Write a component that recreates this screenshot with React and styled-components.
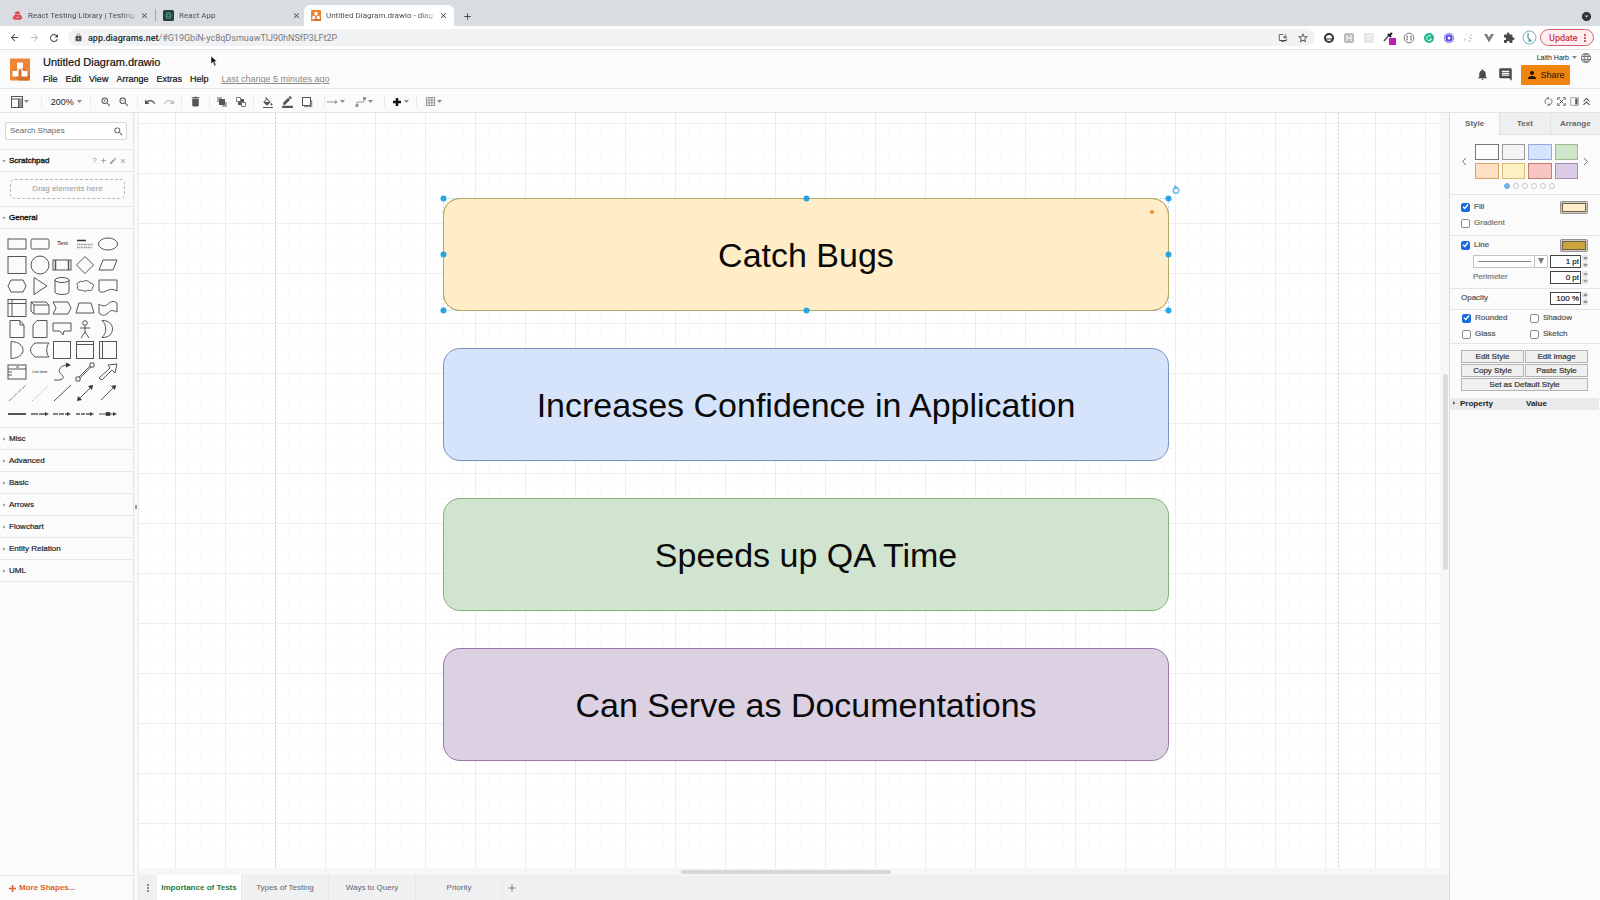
import React from "react";
import styled, { createGlobalStyle, css } from "styled-components";
import {
  MdZoomIn, MdZoomOut, MdUndo, MdRedo, MdDelete, MdFormatColorFill, MdBorderColor, MdGridOn,
  MdNotifications, MdInsertComment, MdLanguage, MdPerson, MdSearch, MdLock, MdExtension,
  MdStarBorder, MdRefresh, MdArrowBack, MdArrowForward, MdArrowDropDown, MdAdd, MdClose,
  MdArrowDropDownCircle, MdMoreVert, MdEdit, MdInstallDesktop, MdArrowRight,
} from "react-icons/md";

const Global = createGlobalStyle`
  * { box-sizing: border-box; }
  body { margin: 0; background: #fbfbfc; }
  button, input, select { font: inherit; color: inherit; margin: 0; padding: 0; border: 0; background: none; border-radius: 0; outline: 0; }
  svg { display: block; flex: none; }
  h1, h2 { margin: 0; font: inherit; }
`;

const Shell = styled.div`
  display: flex;
  flex-direction: column;
  height: 100vh;
  overflow: hidden;
  font: 8px/10px "Liberation Sans", Arial, sans-serif;
  color: #222;
`;

/* ---------- browser chrome ---------- */
const Chrome = styled.div`
  font-family: Roboto, "Liberation Sans", sans-serif;
`;
const TabStrip = styled.div`
  display: flex;
  align-items: flex-end;
  height: 26px;
  padding: 0 8px;
  background: #d9dce0;
`;
const BrowserTab = styled.div`
  display: flex;
  align-items: center;
  width: ${(p) => p.$w}px;
  height: 21px;
  padding: 0 ${(p) => (p.$active ? 6 : 3)}px 0 ${(p) => (p.$active ? 7 : 4)}px;
  border-radius: 6px 6px 0 0;
  background: ${(p) => (p.$active ? "#fff" : "transparent")};
  color: #4c4f53;
`;
const TabTitle = styled.span`
  flex: 1;
  padding-left: 5px;
  overflow: hidden;
  white-space: nowrap;
  mask-image: linear-gradient(90deg, #000 84%, transparent);
`;
const TabRule = styled.span`
  width: 1px;
  height: 12px;
  margin: 0 3px 5px;
  background: #a5a9ad;
`;
const IconButton = styled.button`
  display: flex;
  align-items: center;
  justify-content: center;
  width: ${(p) => p.$w || 20}px;
  height: ${(p) => p.$h || 20}px;
  color: ${(p) => p.$c || "#4a4a4a"};
`;
const Push = styled.span`
  flex: 1;
`;
const AddressBar = styled.div`
  display: flex;
  align-items: center;
  height: 24px;
  padding: 0 6px 0 4px;
  background: #fff;
  border-bottom: 1px solid #e1e3e5;
`;
const UrlPill = styled.div`
  display: flex;
  flex: 1;
  align-items: center;
  gap: 5px;
  height: 17px;
  margin: 0 4px;
  padding: 0 2px 0 6px;
  border-radius: 9px;
  background: #f0f2f4;
`;
const UrlText = styled.span`
  flex: 1;
  font-size: 9px;
  line-height: 12px;
  color: #75797d;
  b { font-weight: 500; color: #27292c; }
`;
const UpdateButton = styled.button`
  display: flex;
  align-items: center;
  justify-content: space-between;
  width: 54px;
  height: 17px;
  margin-left: 1px;
  padding: 0 2px 0 8px;
  border: 1px solid #d8606a;
  border-radius: 9px;
  background: #fdeff0;
  font-size: 9px;
  font-weight: 500;
  color: #c93a45;
`;

/* ---------- editor header ---------- */
const Header = styled.header`
  display: flex;
  height: 39px;
  padding: 0 8px 0 10px;
  background: #fbfbfc;
  border-bottom: 1px solid #e6e7e9;
`;
const Logo = styled.div`
  margin-top: 8px;
`;
const TitleBlock = styled.div`
  padding: 5px 0 0 13px;
`;
const FileTitle = styled.h1`
  font-size: 11px;
  line-height: 14px;
  color: #111;
  -webkit-text-stroke: 0.2px #111;
`;
const MenuBar = styled.nav`
  display: flex;
  gap: 8px;
  margin-top: 4px;
  font-size: 9px;
  line-height: 12px;
  color: #111;
  button { -webkit-text-stroke: 0.2px #111; }
`;
const MenuLink = styled.a`
  margin-left: 5px;
  color: #888;
  text-decoration: underline;
`;
const Account = styled.div`
  display: flex;
  flex-direction: column;
  align-items: flex-end;
  margin-left: auto;
`;
const UserRow = styled.button`
  display: flex;
  align-items: center;
  gap: 2px;
  height: 15px;
  font-size: 7px;
`;
const ActionRow = styled.div`
  display: flex;
  align-items: center;
  height: 19px;
  margin-right: 22px;
`;
const ShareButton = styled.button`
  display: flex;
  align-items: center;
  justify-content: center;
  gap: 2px;
  width: 49px;
  height: 20px;
  margin-left: 4px;
  border-radius: 1px;
  background: #f08411;
  font-size: 9px;
  color: #241300;
`;

const Toolbar = styled.div`
  display: flex;
  align-items: center;
  height: 24px;
  padding: 2px 8px 0 0;
  background: #fbfbfc;
  border-bottom: 1px solid #e3e4e6;
`;
const ToolGroup = styled.div`
  display: flex;
  align-items: center;
  justify-content: ${(p) => (p.$gap ? "flex-start" : "space-evenly")};
  gap: ${(p) => p.$gap || 0}px;
  width: ${(p) => p.$w}px;
  height: 12px;
  padding-left: ${(p) => p.$start || 0}px;
  border-right: ${(p) => (p.$last ? 0 : 1)}px solid #ebecee;
`;
const Tool = styled.button`
  display: flex;
  align-items: center;
  font-size: 9px;
  color: ${(p) => p.$c || "#555"};
`;

/* ---------- workspace ---------- */
const Workspace = styled.main`
  display: flex;
  flex: 1;
  min-height: 0;
`;
const Sidebar = styled.aside`
  display: flex;
  flex-direction: column;
  width: 134px;
  background: #fbfbfc;
  border-right: 1px solid #e3e4e7;
`;
const SearchBox = styled.label`
  display: flex;
  align-items: center;
  height: 18px;
  margin: 9px 6px 9px 5px;
  padding: 0 2px 0 4px;
  border: 1px solid #d5d6d8;
  border-radius: 2px;
  background: #fff;
  color: #555;
  input { flex: 1; min-width: 0; }
  input::placeholder { color: #666; opacity: 1; }
`;
const Section = styled.div`
  display: flex;
  align-items: center;
  height: 22px;
  padding-right: 6px;
  border-top: 1px solid #e6e7e9;
  color: #999;
`;
const SectionButton = styled.button`
  display: flex;
  flex: 1;
  align-items: center;
  gap: 1px;
  height: 100%;
  color: #1c1c1c;
  -webkit-text-stroke: ${(p) => (p.$open ? "0.4px" : "0.2px")} #1c1c1c;
  svg { color: #777; }
`;
const DropZone = styled.div`
  display: flex;
  align-items: center;
  justify-content: center;
  height: 20px;
  margin: 7px 8px 7px 10px;
  border: 1px dashed #b5b5b5;
  border-radius: 5px;
  color: #999;
`;
const SectionRule = styled.div`
  border-top: 1px solid #e6e7e9;
`;
const ShapeGrid = styled.div`
  display: grid;
  grid-template-columns: repeat(5, 1fr);
  grid-auto-rows: 1fr;
  justify-items: center;
  align-items: center;
  height: 199px;
  padding: 4px 14px 2px 6px;
  border-top: 1px solid #e6e7e9;
`;
const ShapeButton = styled.button`
  width: 22px;
  height: 20px;
  font-size: ${(p) => (p.$small ? 4 : 6)}px;
  line-height: 7px;
  white-space: nowrap;
  svg { fill: none; stroke: #555; stroke-width: 1; }
`;
const MoreShapes = styled.button`
  display: flex;
  align-items: center;
  gap: 3px;
  height: 25px;
  margin-top: auto;
  padding: 0 9px;
  border-top: 1px solid #e1e3e5;
  font-weight: 700;
  color: #d8651f;
`;
const Splitter = styled.div`
  display: flex;
  align-items: center;
  width: 5px;
  background: #f8f8fa;
  border-right: 1px solid #e9eaec;
  &::after { content: ""; width: 2px; height: 4px; margin-left: 1px; background: #999; }
`;
const Center = styled.section`
  display: flex;
  flex: 1;
  flex-direction: column;
  min-width: 0;
  background: #f6f7f9;
`;
const CanvasRow = styled.div`
  display: flex;
  flex: 1;
  min-height: 0;
`;
const Canvas = styled.div`
  position: relative;
  flex: 1;
  overflow: hidden;
  background: #fff;
`;
const GridSvg = styled.svg`
  width: 100%;
  height: 100%;
`;
const ScrollY = styled.div`
  width: 9px;
  padding: 261px 1px 0 3px;
  &::after { content: ""; display: block; height: 196px; border-radius: 3px; background: #dcdddf; }
`;
const ScrollX = styled.div`
  display: flex;
  justify-content: center;
  height: 7px;
  padding: 2px 16px 1px 0;
  &::after { content: ""; width: 210px; border-radius: 3px; background: #d6d7d9; }
`;
const Node = styled.div`
  position: absolute;
  left: 304px;
  top: ${(p) => p.$top}px;
  display: flex;
  align-items: center;
  justify-content: center;
  width: 726px;
  height: 113px;
  border: 1px solid ${(p) => p.$line};
  border-radius: 17px;
  background: ${(p) => p.$fill};
  font-size: 34px;
  line-height: 40px;
  color: #0a0a0a;
`;
const Selection = styled.svg`
  position: absolute;
  left: 298px;
  top: 70px;
`;
const Pointer = styled.svg`
  position: absolute;
  left: 210px;
  top: 55px;
`;
const PageBar = styled.div`
  display: flex;
  height: 25px;
  background: #eef0f2;
  color: #666;
`;
const PageTab = styled.button`
  width: ${(p) => p.$w}px;
  border-right: 1px solid #e6e8ea;
  ${(p) => p.$active && css`
    background: #fff;
    font-weight: 700;
    color: #1e7b45;
  `}
`;

/* ---------- format panel ---------- */
const Format = styled.aside`
  width: 151px;
  background: #fbfbfc;
  border-left: 1px solid #dcdde0;
`;
const FormatTabs = styled.div`
  display: flex;
  height: 22px;
`;
const FormatTab = styled.button`
  flex: 1;
  font-weight: 700;
  color: #666;
  background: ${(p) => (p.$active ? "transparent" : "#eeeff1")};
  border: solid #dfe0e3;
  border-width: ${(p) => (p.$active ? "0" : "0 0 1px 1px")};
`;
const Palette = styled.div`
  display: grid;
  grid-template-columns: 17px 1fr 16px;
  align-items: center;
  padding: 9px 6px 0 8px;
`;
const Swatches = styled.div`
  display: grid;
  grid-template-columns: repeat(4, 1fr);
  gap: 3px;
`;
const Swatch = styled.button`
  height: 16px;
  border: 1px solid ${(p) => p.$line};
  background: ${(p) => p.$fill};
`;
const Dots = styled.div`
  display: flex;
  justify-content: center;
  gap: 3px;
  height: 15px;
  padding: 4px 0 0 9px;
`;
const Dot = styled.button`
  width: 6px;
  height: 6px;
  border: 1px solid ${(p) => (p.$on ? "#6ab5ec" : "#c4c5c7")};
  border-radius: 50%;
  background: ${(p) => (p.$on ? "#6ab5ec" : "#fff")};
`;
const Panel = styled.div`
  padding: ${(p) => p.$pad};
  border-top: 1px solid #e3e4e6;
  color: #555;
`;
const Row = styled.div`
  display: flex;
  align-items: center;
  justify-content: space-between;
  height: 16px;
  padding-left: ${(p) => p.$indent || 0}px;
  color: ${(p) => p.$c || "inherit"};
  -webkit-text-stroke: 0.2px currentColor;
`;
const CheckLabel = styled.label`
  display: flex;
  align-items: center;
  gap: 4px;
  width: ${(p) => (p.$w ? `${p.$w}px` : "auto")};
  input {
    appearance: none;
    width: 9px;
    height: 9px;
    border: 1px solid #8c8c8c;
    border-radius: 2px;
    background: #fff;
  }
  input:checked {
    border-color: #1a6be0;
    background: #1a6be0;
  }
  span { position: relative; }
`;
const Tick = styled.svg`
  position: absolute;
  left: -12px;
  top: 1px;
  pointer-events: none;
`;
const ColorButton = styled.button`
  width: 28px;
  height: 13px;
  border: 2px solid #cfc8c4;
  border-radius: 2px;
  outline: 1px solid #99928e;
  outline-offset: -1px;
  background: ${(p) => p.$fill};
  box-shadow: inset 0 0 0 1px #6b6049;
`;
const LineSelect = styled.span`
  display: flex;
  align-items: center;
  width: 75px;
  height: 13px;
  padding-right: 3px;
  border: 1px solid #c4c4c4;
  background: #fff;
  select {
    appearance: none;
    flex: 1;
    height: 11px;
    margin-right: 3px;
    border-right: 1px solid #c4c4c4;
    background: linear-gradient(#888, #888) no-repeat 4px 5px / 53px 1px;
  }
`;
const NumberField = styled.span`
  display: flex;
  gap: 1px;
  input {
    width: 31px;
    height: 13px;
    padding-right: 1px;
    border: 1px solid #444;
    background: #fff;
    text-align: right;
    color: #222;
  }
`;
const Stepper = styled.span`
  display: flex;
  flex-direction: column;
  gap: 1px;
  button {
    display: flex;
    align-items: center;
    justify-content: center;
    width: 6px;
    height: 6px;
    border-radius: 2px;
    background: #e2e2e3;
  }
`;
const ButtonGrid = styled.div`
  display: grid;
  grid-template-columns: 1fr 1fr;
  gap: 1px;
`;
const StyleButton = styled.button`
  grid-column: ${(p) => (p.$wide ? "1 / 3" : "auto")};
  height: 13px;
  border: 1px solid #b3b3b5;
  background: #f0f0f1;
  color: #333;
  -webkit-text-stroke: 0.2px #333;
`;
const PropertyTable = styled.table`
  width: 149px;
  border-collapse: collapse;
  background: #e9eaec;
  font-weight: 700;
  color: #222;
  th { height: 12px; padding: 0; text-align: left; }
  th:first-child { width: 76px; }
  svg { display: inline-block; vertical-align: top; margin-right: 2px; }
`;

const S = ({ w = 12, h = 12, vb = "0 0 12 12", children, ...p }) => (
  <svg width={w} height={h} viewBox={vb} fill="none" stroke="currentColor" aria-hidden="true" {...p}>{children}</svg>
);
const Caret = () => <S w="7" h="5" vb="0 0 7 5" fill="#888" stroke="none"><path d="M1 1h5L3.500 4z" /></S>;

const DrawioMark = ({ w, h }) => (
  <S w={w} h={h} vb="0 0 20 22" stroke="none">
    <rect width="20" height="22" rx="1" fill="#ee8534" />
    <path d="M11 7l9 9v5a1 1 0 0 1-1 1H9l-5-5z" fill="#d9712a" />
    <path d="M10 8L5.500 16M10 8l4.500 8" stroke="#fff" strokeWidth="1.500" />
    <rect x="7" y="4" width="6" height="6" rx=".6" fill="#fff" />
    <rect x="2.500" y="12.500" width="6" height="5.500" rx=".6" fill="#fff" />
    <rect x="11.500" y="12.500" width="6" height="5.500" rx=".6" fill="#fff" />
  </S>
);

const arrowEnd = <path d="M9 0l-4-2v4z" fill="#444" stroke="none" />;
const shapes = [
  ["Rectangle", <rect x="-9" y="-5" width="18" height="10" />],
  ["Rounded rectangle", <rect x="-9" y="-5" width="18" height="10" rx="1.500" />],
  ["Text", null, "Text"],
  ["Textbox", <g><path d="M-8-3.500h9" stroke="#333" strokeWidth="1.500" /><path d="M-8 .5H8M-8 3.500H7" stroke="#aaa" strokeWidth="1.500" strokeDasharray="3 .5" /></g>],
  ["Ellipse", <ellipse rx="9.500" ry="6" />],
  ["Square", <rect x="-9" y="-8.500" width="18" height="17" />],
  ["Circle", <circle r="9" />],
  ["Process", <g><rect x="-9" y="-5" width="18" height="10" /><path d="M-6.500-5V5M6.500-5V5" strokeWidth="1.500" /></g>],
  ["Diamond", <path d="M0-8.500L8.500 0 0 8.500-8.500 0z" />],
  ["Parallelogram", <path d="M-5-5H9L5 5H-9z" />],
  ["Hexagon", <path d="M-6-6H6L9 0 6 6H-6L-9 0z" />],
  ["Triangle", <path d="M-6-8.500L7 0-6 8.500z" />],
  ["Cylinder", <g><ellipse cy="-6" rx="7" ry="2.500" /><path d="M-7-6V6C-7 9.300 7 9.300 7 6V-6" /></g>],
  ["Cloud", <path d="M-5-4C-8-4-9-1-7 0-9 3-6 5-3 4-1 6 2 5 3 4 6 6 8 3 7 2 10 0 8-3 5-3 3-6-1-6-2-4-3-5-5-5-5-4z" />],
  ["Document", <path d="M-9-6H9V5C4 2 0 4-2 5-5 7-8 6-9 5z" />],
  ["Internal storage", <g><rect x="-9" y="-8.500" width="18" height="17" /><path d="M-5-8.500V8.500M-9-4.500H9" /></g>],
  ["Cube", <g><path d="M-9-6H6L9-3V6H-6L-9 3z" /><path d="M-9-6L-6-3H9M-6-3V6" /></g>],
  ["Step", <path d="M-9-6H6L9 0 6 6H-9L-6 0z" />],
  ["Trapezoid", <path d="M-6-5H6L9 5H-9z" />],
  ["Tape", <path d="M-9-4C-5-1-2-2 0-4S5-8 9-5V4C5 2 2 2 0 5-3 8-6 8-9 5z" />],
  ["Note", <path d="M-7-8.500H3L7-4V8.500H-7zM3-8.500V-4H7" />],
  ["Card", <path d="M-3-8.500H7V8.500H-7V-4z" />],
  ["Callout", <path d="M-9-6H9V2H2L1 6-2 2H-9z" />],
  ["Actor", <g><circle cy="-6" r="2.300" /><path d="M0-4V3M-5-1H5M0 3l-4 6M0 3l4 6" /></g>],
  ["Or", <path d="M-6-8.500C8-9 8 9-6 8.500-1 4-1-4-6-8.500z" />],
  ["And", <path d="M-6-8.500C10-8 10 8-6 8.500z" />],
  ["Data storage", <path d="M-5-7H9C6-4 6 4 9 7H-5C-11 2-11-2-5-7z" />],
  ["Container", <rect x="-8.500" y="-8.500" width="17" height="17" />],
  ["Vertical container", <g><rect x="-8.500" y="-8.500" width="17" height="17" /><path d="M-8.500-5.500h17" /></g>],
  ["Horizontal container", <g><rect x="-8.500" y="-8.500" width="17" height="17" /><path d="M-5.500-8.500v17" /></g>],
  ["List", <g><rect x="-9" y="-7" width="18" height="14" /><path d="M-9-3H9M-9 0h4M-9 3h4M-1-5h3" /></g>],
  ["List item", null, "List item"],
  ["Curve", <g><path d="M-8 8C4 9 2 4-1 2-6-2 0-7 5-7" /><path d="M9-7L4-9.500V-4.500z" fill="#333" stroke="none" /></g>],
  ["Bidirectional arrow", <g><path d="M-6 5L5-6M-5 6L6-5" /><path d="M-9 5h4v4h-4zM5-9h4v4H5z" /></g>],
  ["Arrow", <path d="M-9 6L2-4 0-7 9-8 7 1 4-2-6 8z" />],
  ["Dashed line", <path d="M-8 8L9-8" stroke="#888" strokeDasharray="5 1" />],
  ["Dotted line", <path d="M-8 8L9-8" stroke="#999" strokeDasharray="1 2" />],
  ["Line", <path d="M-8 8L9-8" />],
  ["Bidirectional connector", <g><path d="M-6 6L6-6" /><path d="M-8 8l1-5 4 4zM8-8L3-7l4 4z" fill="#333" stroke="none" /></g>],
  ["Directional connector", <g><path d="M-7 7L6-6" /><path d="M8-8L3-7l4 4z" fill="#333" stroke="none" /></g>],
  ["Link", <path d="M-9 0H9" strokeWidth="2" />],
  ["Connector with label", <g><path d="M-9 0H5" strokeDasharray="7 1" strokeWidth="1.500" />{arrowEnd}</g>],
  ["Connector with two labels", <g><path d="M-9 0H5" strokeDasharray="5 1" strokeWidth="1.500" />{arrowEnd}</g>],
  ["Connector with three labels", <g><path d="M-9 0H5" strokeDasharray="4 1" strokeWidth="1.500" />{arrowEnd}</g>],
  ["Connector with symbol", <g><path d="M-9 0H5" /><path d="M-2-1.500h4v3h-4z" fill="#333" />{arrowEnd}</g>],
];

const swatches = [
  ["#fff", "#777"], ["#f4f4f4", "#999"], ["#d5e3fc", "#91aad6"], ["#cfe5cb", "#97bf8a"],
  ["#ffdfc2", "#dba368"], ["#fdf0c4", "#d9bf6c"], ["#f6c5c4", "#c57a78"], ["#dbcce5", "#a78eb5"],
];

const nodes = [
  ["Catch Bugs", "#feedc6", "#b9a565"],
  ["Increases Confidence in Application", "#d5e4fb", "#7d92c0"],
  ["Speeds up QA Time", "#d1e4cf", "#85b377"],
  ["Can Serve as Documentations", "#dcd0e3", "#9a7bab"],
];

const Check = ({ label, on, w }) => (
  <CheckLabel $w={w}>
    <input type="checkbox" defaultChecked={on} />
    <span>
      {on && <Tick width="7" height="7" viewBox="0 0 7 7" fill="none" stroke="#fff" strokeWidth="1.400"><path d="M1 3.800L2.800 5.500 6 1.500" /></Tick>}
      {label}
    </span>
  </CheckLabel>
);

const Num = ({ label, value }) => (
  <NumberField>
    <input aria-label={label} defaultValue={value} />
    <Stepper>
      <button aria-label={`Increase ${label}`}><S w="5" h="4" vb="0 0 5 4"><path d="M1 3l1.500-2L4 3" /></S></button>
      <button aria-label={`Decrease ${label}`}><S w="5" h="4" vb="0 0 5 4"><path d="M1 1l1.500 2L4 1" /></S></button>
    </Stepper>
  </NumberField>
);

const extensions = [
  ["Wave", <S><circle cx="6" cy="6" r="4" stroke="#333" strokeWidth="2" /><path d="M2 7h8" stroke="#333" /></S>],
  ["Notes", <S stroke="none"><rect x="1" y="1" width="10" height="10" rx="2" fill="#bbb" /><path d="M4 3v6M8 3v6M4 6h4" stroke="#fff" /></S>],
  ["Frame", <S stroke="none"><rect x="1" y="1" width="10" height="10" rx="1" fill="#e6e6e6" /><path d="M3 4h6M3 7h6" stroke="#f6f6f6" /></S>],
  ["Color picker", <S w="15" h="14" vb="0 0 15 14"><path d="M2 10l5-6" stroke="#555" strokeWidth="1.500" /><path d="M6 3l3 3M8 4l2-2" stroke="#222" strokeWidth="2" /><path d="M7 7h7v7H7z" fill="#c21db0" stroke="none" /></S>],
  ["Braces", <S><circle cx="6" cy="6" r="4.800" stroke="#777" /><path d="M5 4H4v4h1M7 4h1v4H7" stroke="#777" /></S>],
  ["Grammar", <S stroke="none"><circle cx="6" cy="6" r="5" fill="#19b98b" /><path d="M8 4.500A2.500 2.500 0 1 0 8.500 7H6.500" stroke="#fff" /></S>],
  ["Target", <S><circle cx="6" cy="6" r="4.500" stroke="#8a83f2" strokeWidth="1.500" strokeDasharray="2 .5" /><circle cx="6" cy="6" r="2.500" stroke="#5148e5" strokeWidth="2" /></S>],
  ["Sketch", <S><path d="M3 3l1-1M8 2v2M6 5l3 2M2 6v3M5 9h3" stroke="#b5b5b5" /></S>],
  ["Vue", <S fill="#7d7d7d" stroke="none"><path d="M1 2h3l2 3.500L8 2h3L6 10.500z" /></S>],
  ["Extensions", <MdExtension size={12} />],
  ["Profile", <S w="15" h="15" vb="0 0 15 15"><circle cx="7.500" cy="7.500" r="6.500" stroke="#7bb0b8" /><path d="M6 3v5l3 3H6" stroke="#3f98a5" strokeWidth="1.200" /></S>],
];

export default function App() {
  return (
    <Shell>
      <Global />
      <Chrome>
        <TabStrip>
          <BrowserTab $w={144}>
            <S w="11" h="11" stroke="none"><path d="M4 1.500h4L9 5H3zM2.500 5.500h7L11.500 9 9 10.500H3L.5 9z" fill="#df4650" /><path d="M4 8h4" stroke="#f3b5b8" /></S>
            <TabTitle>React Testing Library | Testing</TabTitle>
            <IconButton aria-label="Close tab" $w={9}><MdClose size={9} /></IconButton>
          </BrowserTab>
          <TabRule />
          <BrowserTab $w={145}>
            <S w="11" h="11" stroke="none"><rect width="12" height="12" rx="2" fill="#243c3b" /><g stroke="#4aa58c" strokeWidth=".7"><ellipse cx="6" cy="6" rx="4" ry="1.600" /><ellipse cx="6" cy="6" rx="4" ry="1.600" transform="rotate(60 6 6)" /><ellipse cx="6" cy="6" rx="4" ry="1.600" transform="rotate(120 6 6)" /></g></S>
            <TabTitle>React App</TabTitle>
            <IconButton aria-label="Close tab" $w={9}><MdClose size={9} /></IconButton>
          </BrowserTab>
          <BrowserTab $w={150} $active>
            <DrawioMark w={10} h={11} />
            <TabTitle>Untitled Diagram.drawio - diag</TabTitle>
            <IconButton aria-label="Close tab" $w={9}><MdClose size={9} /></IconButton>
          </BrowserTab>
          <IconButton aria-label="New tab" $w={26}><MdAdd size={11} /></IconButton>
          <Push />
          <IconButton aria-label="Search tabs" $w={12} $c="#333"><MdArrowDropDownCircle size={11} /></IconButton>
        </TabStrip>
        <AddressBar>
          <IconButton aria-label="Back"><MdArrowBack size={11} /></IconButton>
          <IconButton aria-label="Forward" $c="#c0c0c0"><MdArrowForward size={11} /></IconButton>
          <IconButton aria-label="Reload"><MdRefresh size={12} /></IconButton>
          <UrlPill>
            <MdLock size={9} color="#555" />
            <UrlText><b>app.diagrams.net</b>/#G19GbiN-yc8qDsmuawTlJ90hNSfP3LFt2P</UrlText>
            <IconButton aria-label="Install" $w={10}><MdInstallDesktop size={10} /></IconButton>
            <IconButton aria-label="Bookmark"><MdStarBorder size={12} /></IconButton>
          </UrlPill>
          {extensions.map(([n, icon]) => <IconButton key={n} aria-label={n}>{icon}</IconButton>)}
          <UpdateButton>Update<MdMoreVert size={12} /></UpdateButton>
        </AddressBar>
      </Chrome>

      <Header>
        <Logo><DrawioMark w={20} h={23} /></Logo>
        <TitleBlock>
          <FileTitle>Untitled Diagram.drawio</FileTitle>
          <MenuBar>
            {["File", "Edit", "View", "Arrange", "Extras", "Help"].map((m) => <button key={m}>{m}</button>)}
            <MenuLink href="#history">Last change 5 minutes ago</MenuLink>
          </MenuBar>
        </TitleBlock>
        <Account>
          <UserRow>Laith Harb<Caret /><MdLanguage size={12} color="#777" /></UserRow>
          <ActionRow>
            <IconButton aria-label="Notifications" $w={22}><MdNotifications size={13} /></IconButton>
            <IconButton aria-label="Comments" $w={24}><MdInsertComment size={15} /></IconButton>
            <ShareButton><MdPerson size={12} />Share</ShareButton>
          </ActionRow>
        </Account>
      </Header>

      <Toolbar>
        <ToolGroup $w={42}>
          <Tool aria-label="View layout"><S><rect x=".5" y=".5" width="11" height="11" /><path d="M.5 3h11M7.500 3v8.500" /><path d="M8 3h3v8H8z" fill="#999" stroke="none" /></S><Caret /></Tool>
        </ToolGroup>
        <ToolGroup $w={49} $start={2}><Tool $c="#222">200%&nbsp;<Caret /></Tool></ToolGroup>
        <ToolGroup $w={47} $start={2}>
          <Tool aria-label="Zoom in"><MdZoomIn size={12} /></Tool>
          <Tool aria-label="Zoom out"><MdZoomOut size={12} /></Tool>
        </ToolGroup>
        <ToolGroup $w={44}>
          <Tool aria-label="Undo"><MdUndo size={12} /></Tool>
          <Tool aria-label="Redo" $c="#c4c4c4"><MdRedo size={12} /></Tool>
        </ToolGroup>
        <ToolGroup $w={28}><Tool aria-label="Delete"><MdDelete size={13} /></Tool></ToolGroup>
        <ToolGroup $w={44}>
          <Tool aria-label="To front"><S stroke="none"><path d="M1 1h5v5H1zM6 6h5v5H6z" fill="#aaa" /><path d="M3 3h6v6H3z" fill="#555" /></S></Tool>
          <Tool aria-label="To back"><S stroke="none"><path d="M3 3h6v6H3z" fill="#555" /><path d="M1.500 1.500h4v4h-4zM6.500 6.500h4v4h-4z" fill="#fff" stroke="#777" /></S></Tool>
        </ToolGroup>
        <ToolGroup $w={71} $start={8} $gap={7}>
          <Tool aria-label="Fill color"><MdFormatColorFill size={12} viewBox="0 0 24 20" /></Tool>
          <Tool aria-label="Line color"><MdBorderColor size={13} /></Tool>
          <Tool aria-label="Shadow"><S><path d="M3 10.500h7.500V4" stroke="#999" strokeWidth="1.500" /><rect x="1.500" y="1.500" width="8" height="8" fill="#fff" /></S></Tool>
        </ToolGroup>
        <ToolGroup $w={60} $start={2} $gap={9}>
          <Tool aria-label="Connection" $c="#999"><S><path d="M0 6h9" /><path d="M8 4l3 2-3 2z" fill="currentColor" stroke="none" /></S><Caret /></Tool>
          <Tool aria-label="Waypoints" $c="#999"><S><path d="M2 9V6h7V3" /><path d="M.5 8h3v3h-3zM8 1h3v3H8z" fill="currentColor" stroke="none" /></S><Caret /></Tool>
        </ToolGroup>
        <ToolGroup $w={32}><Tool aria-label="Insert" $c="#111"><S strokeWidth="2.500"><path d="M6 2v8M2 6h8" /></S><Caret /></Tool></ToolGroup>
        <ToolGroup $w={34} $last><Tool aria-label="Table" $c="#888"><MdGridOn size={11} /><Caret /></Tool></ToolGroup>
        <Push />
        <IconButton aria-label="Rotate" $w={13}><S w="9" h="9"><path d="M3 9.500A4.500 4.500 0 0 1 6 1.500M9 2.500a4.500 4.500 0 0 1-3 8M4.500 0L7 1.500 5 3.500M7.500 9L5 10.500l2 1.500" /></S></IconButton>
        <IconButton aria-label="Fullscreen" $w={13}><S w="9" h="9" strokeWidth="1.200"><path d="M1 4V1h3M8 1h3v3M11 8v3H8M4 11H1V8M3.500 3.500l5 5M8.500 3.500l-5 5" /></S></IconButton>
        <IconButton aria-label="Format panel" $w={12} $c="#888"><S w="9" h="9"><rect x="1" y="1" width="10" height="10" /><path d="M7 2h3v8H7z" fill="#555" stroke="none" /></S></IconButton>
        <IconButton aria-label="Collapse" $w={12}><S w="9" h="9" strokeWidth="1.400"><path d="M2 6l4-4 4 4M2 10.500l4-4 4 4" /></S></IconButton>
      </Toolbar>

      <Workspace>
        <Sidebar>
          <SearchBox><input aria-label="Search Shapes" placeholder="Search Shapes" /><MdSearch size={11} /></SearchBox>
          <Section>
            <SectionButton $open><MdArrowDropDown size={8} />Scratchpad</SectionButton>
            <IconButton $w={7} $c="#999">?</IconButton>
            <IconButton aria-label="Add" $w={10} $c="#999"><MdAdd size={9} /></IconButton>
            <IconButton aria-label="Edit" $w={10} $c="#999"><MdEdit size={8} /></IconButton>
            <IconButton aria-label="Close" $w={9} $c="#999"><MdClose size={8} /></IconButton>
          </Section>
          <SectionRule />
          <DropZone>Drag elements here</DropZone>
          <Section><SectionButton $open><MdArrowDropDown size={8} />General</SectionButton></Section>
          <ShapeGrid>
            {shapes.map(([n, d, t]) => (
              <ShapeButton key={n} aria-label={n} $small={n === "List item"}>
                {t || <svg width="22" height="20" viewBox="-11 -10 22 20">{d}</svg>}
              </ShapeButton>
            ))}
          </ShapeGrid>
          {["Misc", "Advanced", "Basic", "Arrows", "Flowchart", "Entity Relation", "UML"].map((s) => (
            <Section key={s}><SectionButton><MdArrowRight size={8} />{s}</SectionButton></Section>
          ))}
          <SectionRule />
          <MoreShapes><S w="7" h="7" vb="0 0 7 7" strokeWidth="1.500"><path d="M3.500 0v7M0 3.500h7" /></S>More Shapes...</MoreShapes>
        </Sidebar>
        <Splitter />

        <Center>
          <CanvasRow>
            <Canvas>
              <GridSvg>
                <defs>
                  <pattern id="grid" x="36" y="10" width="50" height="50" patternUnits="userSpaceOnUse">
                    <path d="M13.500 0v50M25.500 0v50M38.500 0v50M0 13.500h50M0 25.500h50M0 38.500h50" stroke="#fafafa" />
                    <path d="M.5 0v50M0 .5h50" stroke="#eeeeef" />
                  </pattern>
                </defs>
                <rect width="100%" height="100%" fill="url(#grid)" />
                <path d="M136.500 0v2000M1199.500 0v2000" stroke="#cfcfcf" strokeDasharray="2 2" />
              </GridSvg>
              {nodes.map(([t, fill, line], i) => (
                <Node key={t} $top={85 + i * 150} $fill={fill} $line={line}>{t}</Node>
              ))}
              <Selection width="750" height="134" viewBox="-6 -15 750 134" fill="none">
                <rect x=".5" y=".5" width="725" height="112" stroke="#a9d6f0" strokeDasharray="2 2" />
                <rect x=".5" y=".5" width="725" height="112" rx="16.500" stroke="#b3a968" />
                {[[0, 0], [363, 0], [725, 0], [0, 56], [725, 56], [0, 112], [363, 112], [725, 112]].map(([x, y]) => (
                  <circle key={`${x}-${y}`} cx={x + 0.5} cy={y + 0.5} r="3" fill="#29a3e2" />
                ))}
                <circle cx="709" cy="14" r="2" fill="#f28c28" />
                <circle cx="733" cy="-7.500" r="2.800" stroke="#6bbcec" strokeWidth="1.500" />
                <path d="M731.500-13l3.500 2.500-3.500 2z" fill="#55b3ea" />
              </Selection>
            </Canvas>
            <ScrollY />
          </CanvasRow>
          <ScrollX />
          <PageBar>
            <IconButton aria-label="Pages" $w={18} $h={25} $c="#777"><MdMoreVert size={12} /></IconButton>
            <PageTab $w={85} $active>Importance of Tests</PageTab>
            <PageTab $w={87}>Types of Testing</PageTab>
            <PageTab $w={87}>Ways to Query</PageTab>
            <PageTab $w={87}>Priority</PageTab>
            <IconButton aria-label="Insert page" $w={18} $h={25} $c="#777"><MdAdd size={12} /></IconButton>
          </PageBar>
        </Center>

        <Format>
          <FormatTabs>
            <FormatTab $active>Style</FormatTab><FormatTab>Text</FormatTab><FormatTab>Arrange</FormatTab>
          </FormatTabs>
          <Palette>
            <IconButton aria-label="Previous styles" $w={12} $c="#777"><S w="6" h="9" vb="0 0 6 9"><path d="M5 1L1.500 4.500 5 8" /></S></IconButton>
            <Swatches>{swatches.map(([f, l]) => <Swatch key={f} aria-label={`Style ${f}`} $fill={f} $line={l} />)}</Swatches>
            <IconButton aria-label="Next styles" $w={16} $c="#777"><S w="6" h="9" vb="0 0 6 9"><path d="M1 1l3.500 3.500L1 8" /></S></IconButton>
          </Palette>
          <Dots>{[0, 1, 2, 3, 4, 5].map((i) => <Dot key={i} aria-label={`Style page ${i + 1}`} $on={i === 0} />)}</Dots>
          <Panel $pad="4px 12px 4px 11px">
            <Row><Check label="Fill" on /><ColorButton aria-label="Fill color" $fill="#feedc6" /></Row>
            <Row $c="#777"><Check label="Gradient" /></Row>
          </Panel>
          <Panel $pad="1px 12px 3px 11px">
            <Row><Check label="Line" on /><ColorButton aria-label="Line color" $fill="#cda43c" /></Row>
            <Row $indent={12}>
              <LineSelect>
                <select aria-label="Line pattern"><option aria-label="Solid" /></select>
                <S w="6" h="6" vb="0 0 6 6" fill="#777" stroke="none"><path d="M0 0h6L3 6z" /></S>
              </LineSelect>
              <Num label="Line width" value="1 pt" />
            </Row>
            <Row $indent={12} $c="#777">Perimeter<Num label="Perimeter" value="0 pt" /></Row>
          </Panel>
          <Panel $pad="1px 12px 3px 11px"><Row>Opacity<Num label="Opacity" value="100 %" /></Row></Panel>
          <Panel $pad="0 12px 1px 12px">
            <Row><Check label="Rounded" on /><Check label="Shadow" w={58} /></Row>
            <Row><Check label="Glass" /><Check label="Sketch" w={58} /></Row>
          </Panel>
          <Panel $pad="6px 12px 7px 11px">
            <ButtonGrid>
              <StyleButton>Edit Style</StyleButton><StyleButton>Edit Image</StyleButton>
              <StyleButton>Copy Style</StyleButton><StyleButton>Paste Style</StyleButton>
              <StyleButton $wide>Set as Default Style</StyleButton>
            </ButtonGrid>
          </Panel>
          <PropertyTable><thead><tr><th><MdArrowRight size={8} />Property</th><th>Value</th></tr></thead></PropertyTable>
        </Format>
      </Workspace>
      <Pointer width="8" height="12" viewBox="0 0 8 12"><path d="M1 1v8l2-2 1.500 4 1.500-.6L4.500 6.500H7z" fill="#111" stroke="#fff" strokeWidth=".5" /></Pointer>
    </Shell>
  );
}
